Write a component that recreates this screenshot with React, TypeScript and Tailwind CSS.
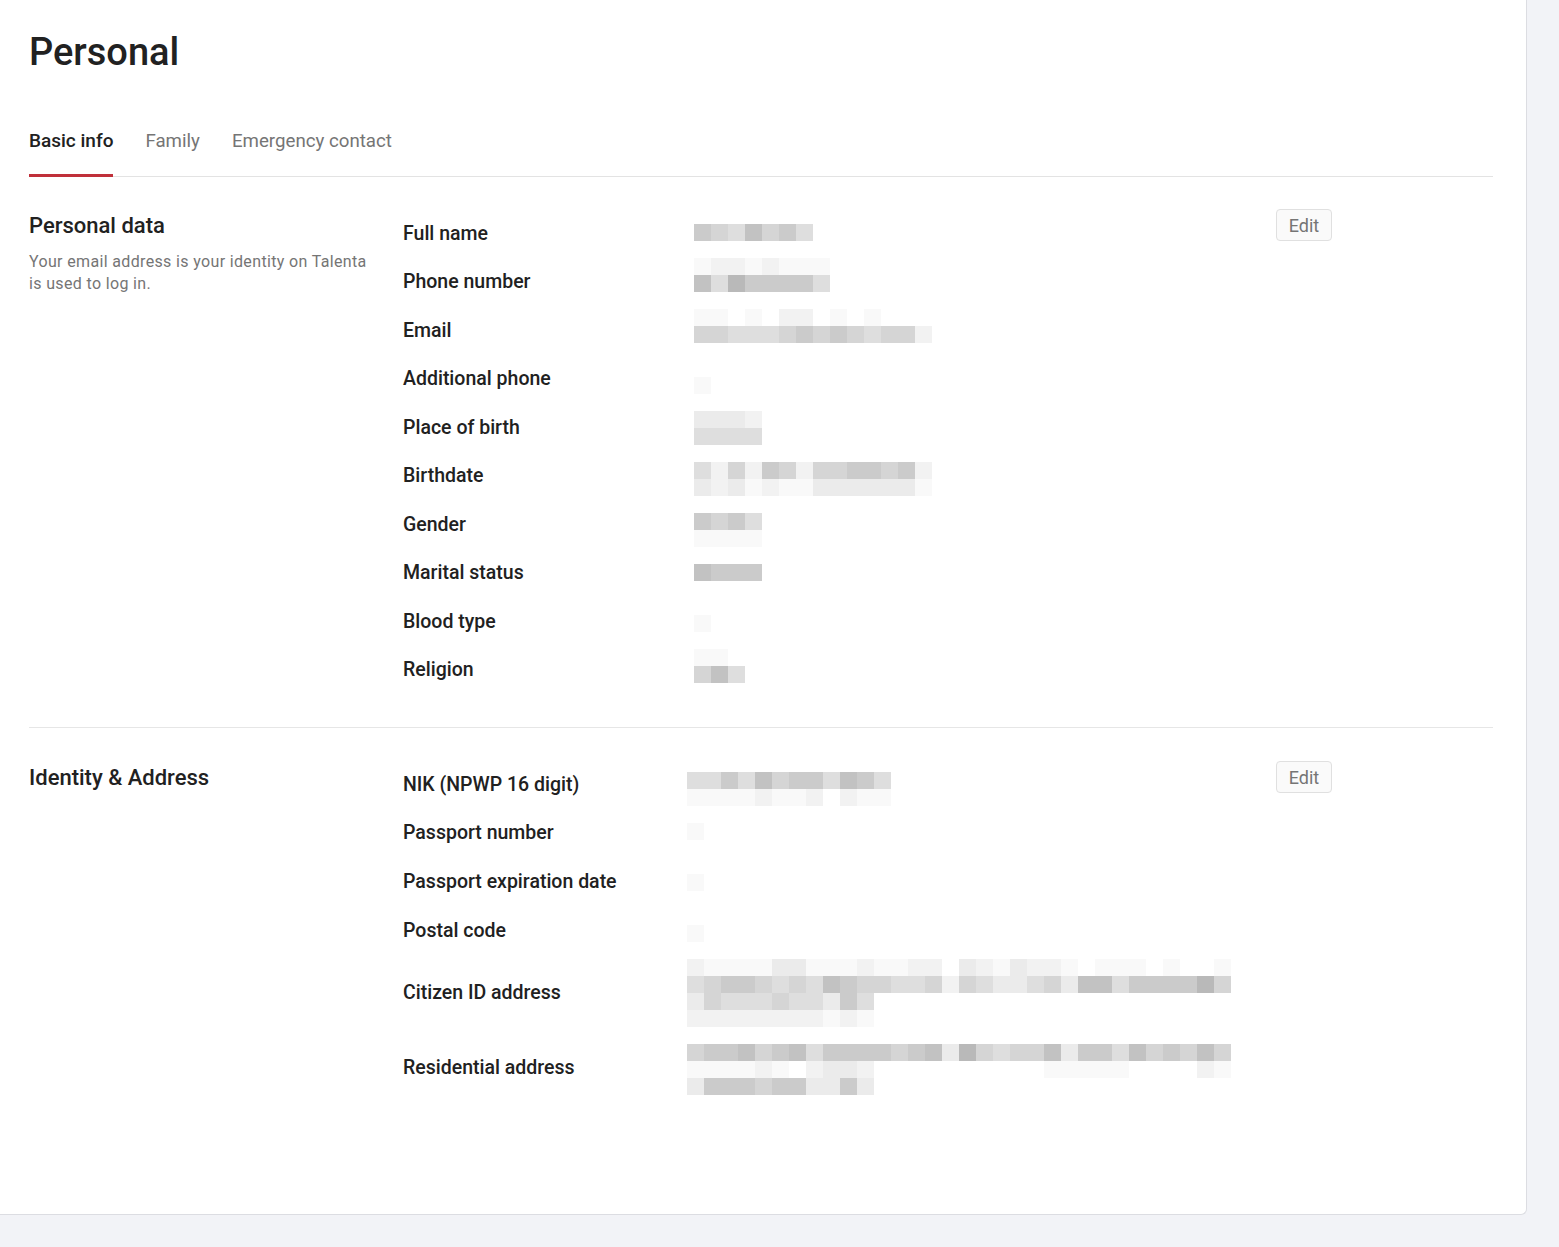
import React from 'react';

const shade: Record<string, string> = {
  '0': 'bg-white',
  '1': 'bg-[#f9f9f9]',
  '2': 'bg-[#f2f2f2]',
  '3': 'bg-[#ebebeb]',
  '4': 'bg-[#dedede]',
  '5': 'bg-[#d5d5d5]',
  '6': 'bg-[#cbcbcb]',
  '7': 'bg-[#c2c2c2]',
  '8': 'bg-[#b9b9b9]',
};

function Blur({ rows }: { rows: string[] }) {
  return (
    <div className="flex flex-col">
      {rows.map((row, i) => (
        <div key={i} className="flex">
          {row.split('').map((c, j) => (
            <div key={j} className={`h-[17px] w-[17px] ${shade[c]}`} />
          ))}
        </div>
      ))}
    </div>
  );
}

type Field = { label: string; h: string; pt: string; rows: string[] };

const personal: Field[] = [
  { label: 'Full name', h: 'h-[48.5px]', pt: 'pt-[15px]', rows: ['6547564'] },
  { label: 'Phone number', h: 'h-[48.5px]', pt: 'pt-[0px]', rows: ['12212111', '74866664'] },
  {
    label: 'Email',
    h: 'h-[48.5px]',
    pt: 'pt-[3px]',
    rows: ['11010220101000', '55444565654552'],
  },
  { label: 'Additional phone', h: 'h-[48.5px]', pt: 'pt-[22px]', rows: ['1'] },
  { label: 'Place of birth', h: 'h-[48.5px]', pt: 'pt-[8px]', rows: ['3332', '4444'] },
  {
    label: 'Birthdate',
    h: 'h-[48.5px]',
    pt: 'pt-[10px]',
    rows: ['42526525566562', '32312113333331'],
  },
  { label: 'Gender', h: 'h-[48.5px]', pt: 'pt-[13px]', rows: ['6564', '1111'] },
  { label: 'Marital status', h: 'h-[48.5px]', pt: 'pt-[15px]', rows: ['7666'] },
  { label: 'Blood type', h: 'h-[48.5px]', pt: 'pt-[18px]', rows: ['1'] },
  { label: 'Religion', h: 'h-[48.5px]', pt: 'pt-[3px]', rows: ['110', '574'] },
];

const identity: Field[] = [
  {
    label: 'NIK (NPWP 16 digit)',
    h: 'h-[47px]',
    pt: 'pt-[11px]',
    rows: ['446475664764', '111121120211'],
  },
  { label: 'Passport number', h: 'h-[49px]', pt: 'pt-[15px]', rows: ['1'] },
  { label: 'Passport expiration date', h: 'h-[49px]', pt: 'pt-[17px]', rows: ['1'] },
  { label: 'Postal code', h: 'h-[49px]', pt: 'pt-[19px]', rows: ['1'] },
  {
    label: 'Citizen ID address',
    h: 'h-[75px]',
    pt: 'pt-[4px]',
    rows: [
      '21111331112112203213221011101001',
      '45665454765544525433453774666685',
      '35444544364',
      '22222222121',
    ],
  },
  {
    label: 'Residential address',
    h: 'h-[76px]',
    pt: 'pt-[14px]',
    rows: [
      '56675674666656738545573664756575',
      '11112102332000000000011111000021',
      '36665663363',
    ],
  },
];

function Section({
  title,
  desc,
  fields,
  labelW,
}: {
  title: string;
  desc?: string;
  fields: Field[];
  labelW: string;
}) {
  return (
    <div className="flex">
      <div className="w-[374px] shrink-0 pr-[30px]">
        <h2 className="pt-px text-[22px] font-medium leading-[32px] text-[#212121]">{title}</h2>
        {desc && (
          <p className="mt-[9px] text-[16px] leading-[22px] tracking-[0.35px] text-[#757575]">
            {desc}
          </p>
        )}
      </div>
      <div className="flex-1">
        {fields.map((f) => (
          <div key={f.label} className={`flex ${f.h}`}>
            <div
              className={`${labelW} shrink-0 flex items-center text-[19.5px] font-medium text-[#212121]`}
            >
              {f.label}
            </div>
            <div className={f.pt}>
              <Blur rows={f.rows} />
            </div>
          </div>
        ))}
      </div>
      <div className="w-[217px] shrink-0">
        <button className="h-[32px] w-[56px] rounded-[4px] border border-[#e0e0e0] bg-[#fafafa] pt-px text-[18px] text-[#757575]">
          Edit
        </button>
      </div>
    </div>
  );
}

export default function App() {
  return (
    <div
      className="min-h-[1247px] bg-[#f2f3f7]"
      style={{ fontFamily: 'Roboto, "Noto Sans", sans-serif' }}
    >
      <div className="w-[1527px] h-[1215px] rounded-br-[6px] border-r border-b border-[#dcdde2] bg-white pl-[29px] pr-[33px]">
        <h1 className="pt-[26px] text-[38px] font-medium leading-[52px] text-[#212121]">
          Personal
        </h1>
        <div className="mt-[51px] flex gap-[32px] border-b border-[#e3e3e3]">
          <div className="-mb-px border-b-[3px] border-[#c0303a] pb-[21px] text-[19px] font-medium leading-[24px] text-[#212121]">
            Basic info
          </div>
          <div className="pb-[21px] text-[18.7px] leading-[24px] text-[#757575]">Family</div>
          <div className="pb-[21px] text-[18.7px] leading-[24px] text-[#757575]">
            Emergency contact
          </div>
        </div>
        <div className="border-b border-[#e6e6e6] pt-[32px] pb-[33px]">
          <Section
            title="Personal data"
            desc="Your email address is your identity on Talenta is used to log in."
            fields={personal}
            labelW="w-[291px]"
          />
        </div>
        <div className="pt-[33px]">
          <Section title="Identity & Address" fields={identity} labelW="w-[284px]" />
        </div>
      </div>
    </div>
  );
}
